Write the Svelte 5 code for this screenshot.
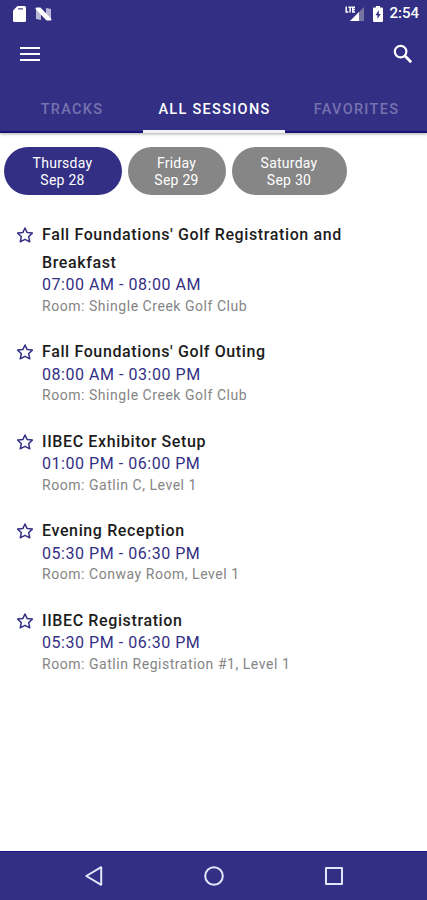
<script lang="ts">
	interface Session {
		title: string;
		time: string;
		room: string;
	}

	const tabs = ['TRACKS', 'ALL SESSIONS', 'FAVORITES'];

	const days = [
		{ name: 'Thursday', date: 'Sep 28' },
		{ name: 'Friday', date: 'Sep 29' },
		{ name: 'Saturday', date: 'Sep 30' }
	];

	const sessions: Session[] = [
		{
			title: "Fall Foundations' Golf Registration and Breakfast",
			time: '07:00 AM - 08:00 AM',
			room: 'Shingle Creek Golf Club'
		},
		{
			title: "Fall Foundations' Golf Outing",
			time: '08:00 AM - 03:00 PM',
			room: 'Shingle Creek Golf Club'
		},
		{ title: 'IIBEC Exhibitor Setup', time: '01:00 PM - 06:00 PM', room: 'Gatlin C, Level 1' },
		{ title: 'Evening Reception', time: '05:30 PM - 06:30 PM', room: 'Conway Room, Level 1' },
		{
			title: 'IIBEC Registration',
			time: '05:30 PM - 06:30 PM',
			room: 'Gatlin Registration #1, Level 1'
		}
	];

	let activeTab = $state(1);
	let activeDay = $state(0);
</script>

<div class="app">
	<header>
		<div class="status-bar">
			<svg width="13" height="16" viewBox="0 0 13 16">
				<path d="M4.5 0H11.5Q13 0 13 1.5V14.5Q13 16 11.5 16H1.5Q0 16 0 14.5V4.5Z" fill="#fff" />
				<path d="M5 2.8H10" stroke="#77749f" stroke-width="1.6" />
			</svg>
			<svg class="nougat" width="17" height="14" viewBox="0 0 17 14">
				<path d="M1 1L6 2V13L1 12ZM11 1L16 2V13L11 11Z" fill="#b9b7d8" />
				<path d="M1.5 1.5H5L15.5 12.5H12Z" fill="#fff" stroke="#fff" stroke-width="2" stroke-linejoin="round" />
			</svg>
			<div class="status-right">
				<svg width="20" height="16" viewBox="0 0 20 16">
					<path d="M19 1V15H5Z" fill="#77749f" />
					<path d="M14 6V15H5Z" fill="#fff" />
					<path
						d="M1.2 0.5V6H3.4M3.4 1.2H6.8M5.1 1V6.5M10 1.2H7.8V6H10M7.8 3.6H10"
						fill="none"
						stroke="#fff"
						stroke-width="1.5"
					/>
				</svg>
				<svg class="battery" width="10" height="16" viewBox="0 0 10 16">
					<path d="M3 0H7V1.5H9Q10 1.5 10 2.5V15Q10 16 9 16H1Q0 16 0 15V2.5Q0 1.5 1 1.5H3Z" fill="#fff" />
					<path d="M5.8 4L2.5 9.3H4.5V13L7.7 8H5.8Z" fill="#332f85" />
				</svg>
				<span class="clock">2:54</span>
			</div>
		</div>

		<div class="toolbar">
			<button aria-label="Menu">
				<svg width="20" height="16" viewBox="0 0 20 16">
					<path d="M0 2H20M0 8H20M0 14H20" stroke="#fff" stroke-width="2" />
				</svg>
			</button>
			<button aria-label="Search">
				<svg width="20" height="20" viewBox="0 0 20 20" fill="none" stroke="#fff">
					<circle cx="7.6" cy="7.6" r="5.8" stroke-width="2.2" />
					<path d="M11.8 11.8L18.2 18.2" stroke-width="2.8" />
				</svg>
			</button>
		</div>

		<nav class="tabs">
			{#each tabs as tab, i}
				<button class="tab" class:active={activeTab === i} onclick={() => (activeTab = i)}>{tab}</button>
			{/each}
		</nav>
	</header>

	<main>
		<div class="days">
			{#each days as day, i}
				<button class="day" class:active={activeDay === i} onclick={() => (activeDay = i)}>
					{day.name}<br />{day.date}
				</button>
			{/each}
		</div>

		{#each sessions as session}
			<article class="session">
				<svg class="star" width="18" height="18" viewBox="0 0 18 18">
					<path
						d="M9 2L11.2 6.6L16.3 7.1L12.6 10.7L13.8 15.8L9 13.3L4.2 15.8L5.4 10.7L1.7 7.1L6.8 6.6Z"
						fill="none"
						stroke="#332f85"
						stroke-width="1.5"
						stroke-linejoin="round"
					/>
				</svg>
				<div>
					<h2>{session.title}</h2>
					<p class="time">{session.time}</p>
					<p class="room">Room: {session.room}</p>
				</div>
			</article>
		{/each}
	</main>

	<footer>
		<svg width="20" height="22" viewBox="0 0 20 22">
			<path d="M17.2 2.2V19.8L2.3 11Z" />
		</svg>
		<svg width="22" height="22" viewBox="0 0 22 22">
			<circle cx="11" cy="11" r="8.8" />
		</svg>
		<svg width="20" height="22" viewBox="0 0 20 22">
			<rect x="2" y="3" width="16" height="16" />
		</svg>
	</footer>
</div>

<style>
	:global(body) {
		background: #fff;
	}

	.app {
		width: 427px;
		height: 900px;
		display: flex;
		flex-direction: column;
		overflow: hidden;
		font-family: Roboto, sans-serif;
	}

	button {
		border: none;
		padding: 0;
		margin: 0;
		background: none;
		font-family: inherit;
		cursor: pointer;
	}

	header {
		height: 133px;
		box-sizing: border-box;
		background: #332f85;
		box-shadow: inset 0 -2px #1b1478, 0 1px 3px rgba(0, 0, 0, 0.35);
		color: #fff;
	}

	svg {
		display: block;
	}

	.status-bar {
		height: 27px;
		display: flex;
		align-items: center;
		padding: 0 8px 0 13px;
	}

	.nougat {
		margin-left: 9px;
	}

	.status-right {
		display: flex;
		align-items: center;
		margin-left: auto;
	}

	.battery {
		margin: 0 6px 0 8px;
	}

	.clock {
		font-size: 15px;
		font-weight: 500;
		line-height: 27px;
	}

	.toolbar {
		height: 54px;
		display: flex;
		align-items: center;
		justify-content: space-between;
		padding: 0 14.5px 0 20px;
	}

	.tabs {
		height: 52px;
		display: grid;
		grid-template-columns: 143px 142px 142px;
	}

	.tab {
		color: #7572ae;
		font-size: 14.5px;
		font-weight: 500;
		letter-spacing: 1.3px;
		white-space: nowrap;
		padding: 7px 0 0 1px;
		border-bottom: 3px solid transparent;
	}

	.tab.active {
		color: #fff;
		border-color: #f3f2fa;
	}

	main {
		flex: 1;
	}

	.days {
		display: grid;
		grid-template-columns: 118px 98px 115px;
		gap: 6px;
		padding: 14px 4px 26px 3.5px;
	}

	.day {
		height: 48px;
		border-radius: 24px;
		background: #868686;
		color: #fff;
		font-size: 14px;
		line-height: 17px;
		letter-spacing: 0.25px;
		padding-top: 1px;
	}

	.day.active {
		background: #332f85;
	}

	.session {
		display: flex;
		padding: 0 60px 20px 16px;
	}

	.star {
		flex: none;
		margin: 5px 8px 0 0;
	}

	h2,
	p {
		margin: 0;
	}

	h2 {
		color: #1c1c1c;
		font-size: 16px;
		font-weight: 500;
		line-height: 27.5px;
		letter-spacing: 0.62px;
	}

	.time {
		color: #332f85;
		font-size: 16px;
		line-height: 17.5px;
		letter-spacing: 0.54px;
	}

	.room {
		color: #858585;
		font-size: 14px;
		line-height: 24.5px;
		letter-spacing: 0.54px;
	}

	footer {
		height: 49px;
		display: flex;
		align-items: center;
		justify-content: space-between;
		box-sizing: border-box;
		padding: 0 83px 0 84px;
		background: #332f85;
		border-top: 1px solid #1b1478;
	}

	footer svg {
		fill: none;
		stroke: #e4e6fa;
		stroke-width: 2;
		stroke-linejoin: round;
	}
</style>
